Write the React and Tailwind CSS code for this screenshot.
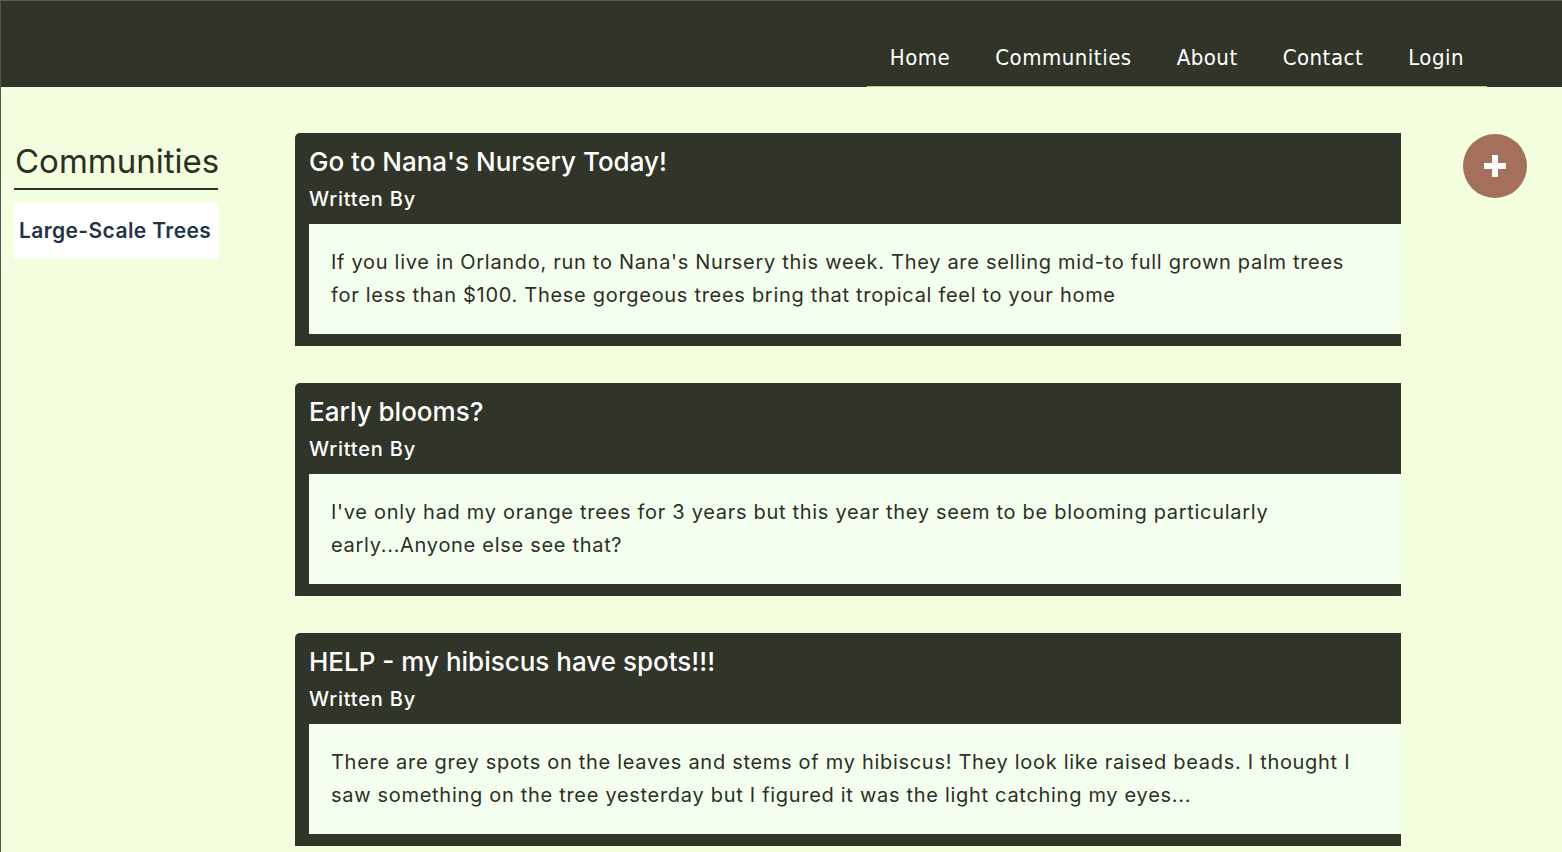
const NAV = ['Home', 'Communities', 'About', 'Contact', 'Login']

const POSTS = [
  {
    title: "Go to Nana's Nursery Today!",
    body: "If you live in Orlando, run to Nana's Nursery this week. They are selling mid-to full grown palm trees for less than $100. These gorgeous trees bring that tropical feel to your home",
  },
  {
    title: 'Early blooms?',
    body: "I've only had my orange trees for 3 years but this year they seem to be blooming particularly early...Anyone else see that?",
  },
  {
    title: 'HELP - my hibiscus have spots!!!',
    body: 'There are grey spots on the leaves and stems of my hibiscus! They look like raised beads. I thought I saw something on the tree yesterday but I figured it was the light catching my eyes...',
  },
]

export default function App() {
  return (
    <div className="h-[852px] overflow-hidden bg-[#f2fede] border-l border-[#555] font-['Inter','Noto_Sans',sans-serif] text-[#2c2f25]">
      {/* Header */}
      <header className="h-[87px] bg-[#313428] border-t border-[#5a5a5a] flex justify-end pr-[75px]">
        <nav className="h-full flex items-end border-b border-[#b9c99a] px-[23px]">
          <ul className="flex gap-[45px] pb-[12px] font-['DejaVu_Sans_Condensed',sans-serif] text-[22px] tracking-[0.5px] text-white">
            {NAV.map((n) => (
              <li key={n}>{n}</li>
            ))}
          </ul>
        </nav>
      </header>

      <div className="flex items-start">
        {/* Sidebar */}
        <aside className="w-[204px] ml-[13px] mt-[54px] shrink-0">
          <h2 className="text-[33px] leading-[40px] pl-[1px] pb-[7px] border-b-2 border-[#313428] text-[#2c2f25]">
            Communities
          </h2>
          <div className="mt-[12px] bg-white h-[57px] flex items-center px-[5px] text-[21px] tracking-[0.4px] font-semibold text-[#1f3547]">
            Large-Scale Trees
          </div>
        </aside>

        {/* Posts */}
        <main className="w-[1106px] ml-[77px] mt-[46px] flex flex-col gap-[37px]">
          {POSTS.map((p) => (
            <article key={p.title} className="bg-[#313428] rounded-tl-[5px] pl-[14px] pb-[12px] h-[213px] flex flex-col">
              <h3 className="text-[26px] leading-[32px] pt-[13px] font-medium text-white">{p.title}</h3>
              <p className="text-[20px] leading-[26px] mt-[8px] tracking-[0.8px] font-medium text-white">Written By</p>
              <div className="mt-[12px] flex-1 bg-[#f4fff0] pl-[22px] pr-[40px] pt-[22px] text-[20px] leading-[33px] tracking-[0.7px] text-[#2c2f25]">
                {p.body}
              </div>
            </article>
          ))}
        </main>

        {/* Add button */}
        <button className="ml-[62px] mt-[47px] w-[64px] h-[64px] rounded-full bg-[#a4705c] flex items-center justify-center shrink-0">
          <svg width="24" height="24" viewBox="0 0 24 24">
            <path d="M9 1h6v8h8v6h-8v8H9v-8H1V9h8z" fill="white" />
          </svg>
        </button>
      </div>
    </div>
  )
}
